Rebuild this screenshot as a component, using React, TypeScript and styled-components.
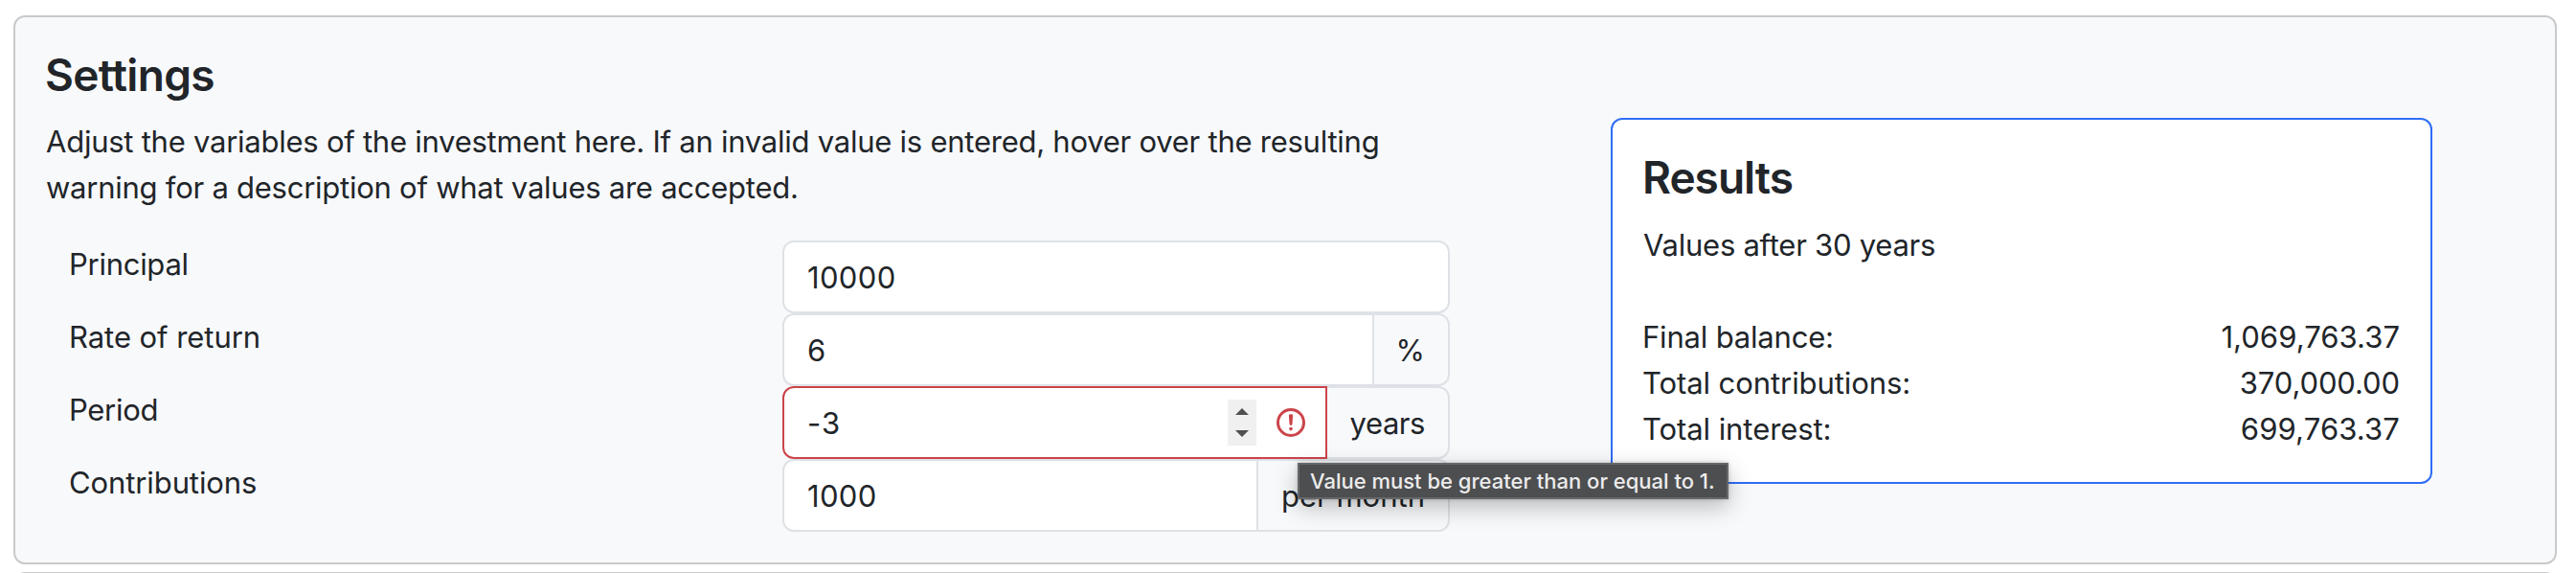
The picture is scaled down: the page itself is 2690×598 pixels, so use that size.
import React from 'react';
import styled, { createGlobalStyle } from 'styled-components';

const GlobalStyle = createGlobalStyle`
  * { box-sizing: border-box; }
  html, body { margin: 0; background: #fff; }
  body {
    font-family: Inter, 'Liberation Sans', sans-serif;
    font-size: 31px;
    line-height: 48px;
    color: #212529;
  }
`;

const Page = styled.main`
  height: 598px;
  overflow: hidden;
  display: flex;
  flex-direction: column;
  gap: 8px;
  padding: 16px 20px 0 14px;
`;

const Card = styled.section`
  height: 573px;
  flex: none;
  display: flex;
  align-items: flex-start;
  padding: 32px;
  background: #f8f9fb;
  border: 2px solid #c9cacc;
  border-radius: 12px;
`;

const SettingsPane = styled.div`
  width: 1490px;
  flex: none;
`;

const Heading = styled.h4<{ $tracking: number }>`
  margin: 0 0 16px -1px;
  font-size: 46px;
  line-height: 57px;
  font-weight: 600;
  letter-spacing: ${(p) => p.$tracking}px;
`;

const Description = styled.p`
  margin: 0 0 31px;
  padding-top: 1px;
  letter-spacing: -0.247px;
`;

const Form = styled.div`
  display: flex;
  flex-direction: column;
`;

const FieldRow = styled.div`
  display: grid;
  grid-template-columns: 1fr 1fr;
  height: 76px;
`;

const FieldLabel = styled.label<{ $tracking: number }>`
  padding: 1px 0 0 24px;
  letter-spacing: ${(p) => p.$tracking}px;
`;

const InputGroup = styled.div`
  display: flex;
  margin: 0 24px;
  height: 76px;
`;

const Value = styled.div<{ $invalid?: boolean; $joined?: boolean; $tracking?: number }>`
  flex: 1;
  display: flex;
  align-items: center;
  position: relative;
  z-index: ${(p) => (p.$invalid ? 1 : 0)};
  padding: 2px 16px 0 24px;
  background: #fff;
  border: 2px solid ${(p) => (p.$invalid ? '#cb444a' : '#dee2e6')};
  border-radius: ${(p) => (p.$joined ? '12px 0 0 12px' : '12px')};
  letter-spacing: ${(p) => p.$tracking ?? 0.35}px;
`;

const Addon = styled.div<{ $width: number; $tracking?: number }>`
  width: ${(p) => p.$width}px;
  margin-left: -2px;
  display: flex;
  align-items: center;
  justify-content: flex-end;
  padding: 2px 24px 0 0;
  white-space: nowrap;
  border: 2px solid #dee2e6;
  border-radius: 0 12px 12px 0;
  background: #f8f9fb;
  letter-spacing: ${(p) => p.$tracking ?? 0}px;
`;

const Stepper = styled.svg`
  width: 30px;
  height: 48px;
  margin: -2px 0 0 auto;
  background: #f0f0f0;
`;

const WarningIcon = styled.svg`
  width: 36px;
  height: 36px;
  margin: -2px 2px 0 18px;
`;

const ResultsCard = styled.section`
  width: 858px;
  height: 382px;
  margin: 73px 0 0 144px;
  padding: 32px;
  background: #fff;
  border: 2px solid #2f6df6;
  border-radius: 12px;
`;

const Horizon = styled.p`
  margin: 0 0 48px;
  padding-top: 2px;
  letter-spacing: -0.25px;
`;

const ResultRow = styled.div`
  display: flex;
  justify-content: space-between;
`;

const ResultText = styled.span<{ $tracking: number }>`
  margin-left: -1px;
  letter-spacing: ${(p) => p.$tracking}px;
`;

const Tooltip = styled.div`
  position: absolute;
  z-index: 5;
  left: 1355px;
  top: 483px;
  width: 450px;
  height: 38px;
  padding-left: 11px;
  font-size: 22px;
  font-weight: 500;
  line-height: 34px;
  letter-spacing: 0;
  white-space: nowrap;
  color: #ececec;
  background: #4d4e50;
  border: 2px solid #66686a;
  box-shadow: 0 8px 24px rgba(0, 0, 0, 0.26), 0 0 4px rgba(0, 0, 0, 0.2);
`;

const results: [string, number, string, number][] = [
  ['Final balance:', -0.18, '1,069,763.37', 0.05],
  ['Total contributions:', -0.08, '370,000.00', -0.1],
  ['Total interest:', -0.07, '699,763.37', 0.13],
];

export default function App() {
  return (
    <>
      <GlobalStyle />
      <Page>
        <Card>
          <SettingsPane>
            <Heading $tracking={-0.7}>Settings</Heading>
            <Description>
              Adjust the variables of the investment here. If an invalid value is entered, hover over the resulting
              <br />
              warning for a description of what values are accepted.
            </Description>
            <Form>
              <FieldRow>
                <FieldLabel $tracking={-0.27}>Principal</FieldLabel>
                <InputGroup>
                  <Value>10000</Value>
                </InputGroup>
              </FieldRow>
              <FieldRow>
                <FieldLabel $tracking={-0.05}>Rate of return</FieldLabel>
                <InputGroup>
                  <Value $joined>6</Value>
                  <Addon $width={81}>%</Addon>
                </InputGroup>
              </FieldRow>
              <FieldRow>
                <FieldLabel $tracking={-0.3}>Period</FieldLabel>
                <InputGroup>
                  <Value $joined $invalid $tracking={1}>
                    -3
                    <Stepper viewBox="0 0 30 48" fill="#505050">
                      <path d="M8 16L15 9L22 16Z M8 32H22L15 39Z" />
                    </Stepper>
                    <WarningIcon viewBox="0 0 12 12" fill="none" stroke="#cb444a">
                      <circle cx="6" cy="6" r="4.5" />
                      <path strokeLinejoin="round" d="M5.8 3.6h.4L6 6.5z" />
                      <circle cx="6" cy="8.2" r=".6" fill="#cb444a" stroke="none" />
                    </WarningIcon>
                  </Value>
                  <Addon $width={130} $tracking={-0.45}>years</Addon>
                </InputGroup>
              </FieldRow>
              <FieldRow>
                <FieldLabel $tracking={-0.1}>Contributions</FieldLabel>
                <InputGroup>
                  <Value $joined>1000</Value>
                  <Addon $width={202}>per month</Addon>
                </InputGroup>
              </FieldRow>
            </Form>
          </SettingsPane>
          <ResultsCard>
            <Heading $tracking={-1}>Results</Heading>
            <Horizon>Values after 30 years</Horizon>
            {results.map(([name, nameTracking, amount, amountTracking]) => (
              <ResultRow key={name}>
                <ResultText $tracking={nameTracking}>{name}</ResultText>
                <ResultText $tracking={amountTracking}>{amount}</ResultText>
              </ResultRow>
            ))}
          </ResultsCard>
        </Card>
        <Card />
      </Page>
      <Tooltip role="tooltip">Value must be greater than or equal to 1.</Tooltip>
    </>
  );
}
